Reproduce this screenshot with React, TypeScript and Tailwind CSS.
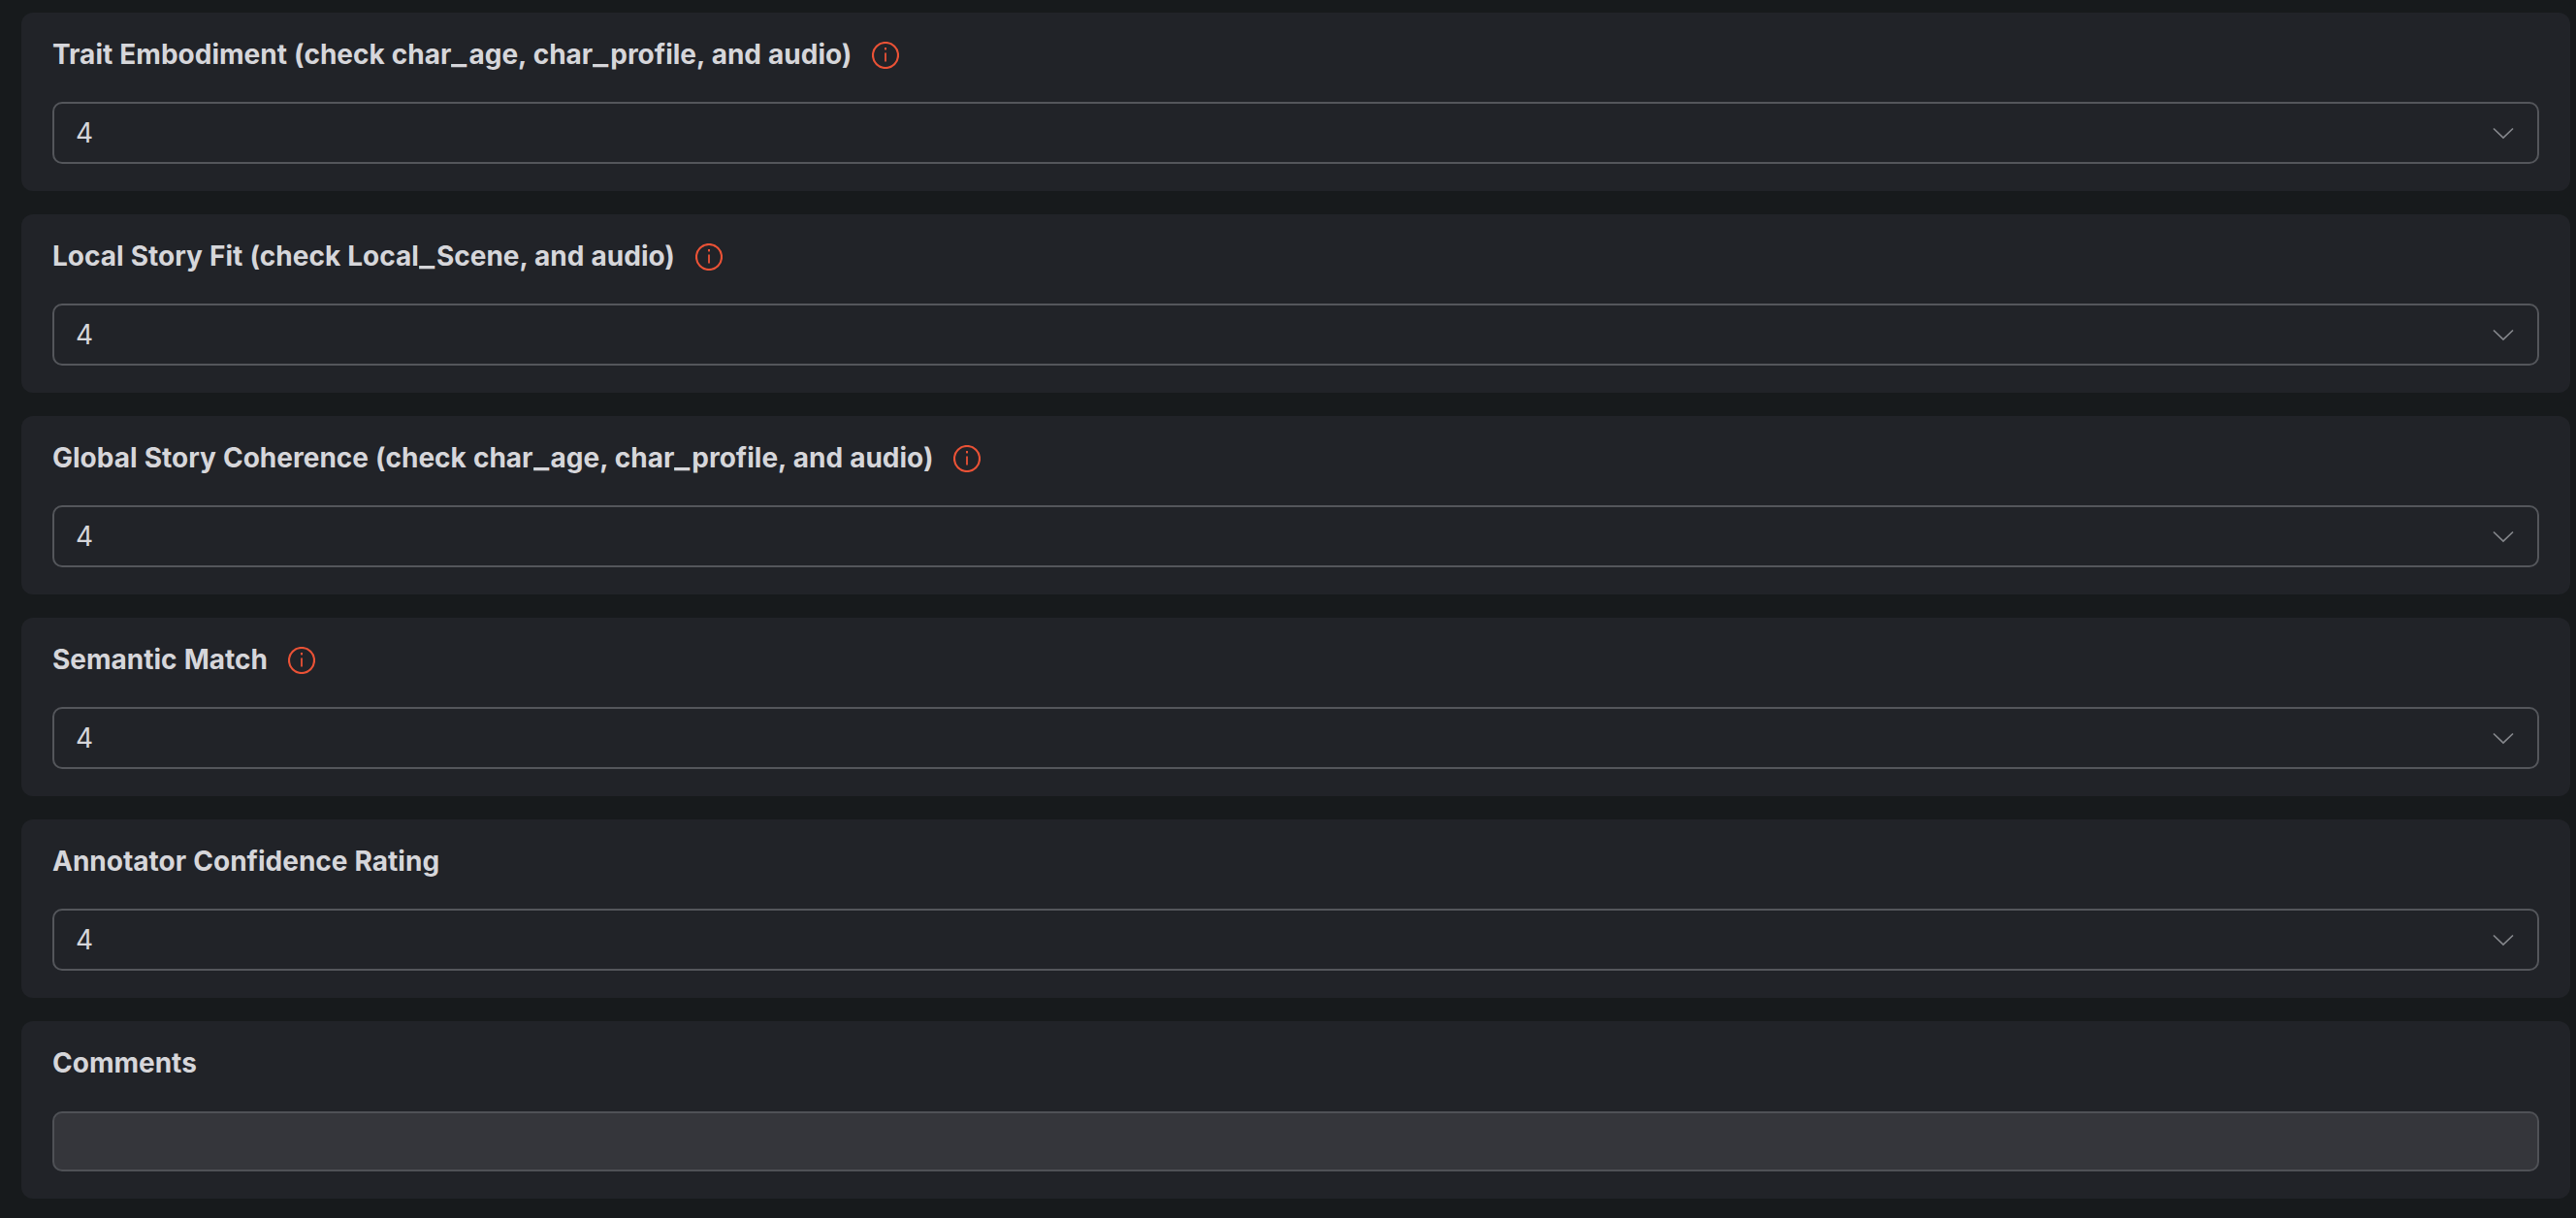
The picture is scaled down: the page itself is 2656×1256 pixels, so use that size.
import React from "react";

function Info() {
  return (
    <svg width="28" height="28" viewBox="0 0 28 28" fill="none" className="mt-[2px] shrink-0">
      <circle cx="14" cy="14" r="13" stroke="#ea5236" strokeWidth="2.2" />
      <path d="M14 11.5V20.5" stroke="#ea5236" strokeWidth="1.8" />
      <rect x="13" y="6" width="2" height="2.4" fill="#ea5236" />
    </svg>
  );
}

function Chevron() {
  return (
    <svg width="22" height="13" viewBox="0 0 22 13" fill="none" className="shrink-0">
      <path d="M1 1.5L11 11L21 1.5" stroke="#85878c" strokeWidth="1.7" />
    </svg>
  );
}

const rows = [
  { label: "Trait Embodiment (check char_age, char_profile, and audio)", info: true },
  { label: "Local Story Fit (check Local_Scene, and audio)", info: true },
  { label: "Global Story Coherence (check char_age, char_profile, and audio)", info: true },
  { label: "Semantic Match", info: true },
  { label: "Annotator Confidence Rating", info: false },
];

function Label({ text, info }: { text: string; info: boolean }) {
  const parts = text.split("_");
  return (
    <div className="flex h-[36px] items-center gap-[21px]">
      <span className="text-[28px] leading-[36px] font-bold text-[#d6d6da] [word-spacing:0.5px]">
        {parts.map((p, i) => (
          <React.Fragment key={i}>
            {i > 0 && <span className="inline-block w-[18px] origin-left scale-x-[1.22]">_</span>}
            {p}
          </React.Fragment>
        ))}
      </span>
      {info && <Info />}
    </div>
  );
}

export default function App() {
  return (
    <div className="h-[1256px] w-[2656px] overflow-hidden bg-[#171a1c] pt-[13px] pl-[22px] pr-[6px] font-['Inter',sans-serif]">
      <div className="flex flex-col gap-[24px]">
        {rows.map((r) => (
          <div key={r.label} className="h-[184px] rounded-[12px] bg-[#212328] px-[32px] pt-[25px]">
            <Label text={r.label} info={r.info} />
            <div className="mt-[31px] flex h-[64px] items-center justify-between rounded-[10px] border-2 border-[#54565b] pl-[22px] pr-[24px]">
              <span className="text-[28px] leading-none font-normal text-[#d6d6da]">4</span>
              <Chevron />
            </div>
          </div>
        ))}
        <div className="h-[183px] rounded-[12px] bg-[#212328] px-[32px] pt-[25px]">
          <Label text="Comments" info={false} />
          <div className="mt-[32px] h-[62px] rounded-[10px] border-2 border-[#4f5156] bg-[#35363b]" />
        </div>
      </div>
    </div>
  );
}
